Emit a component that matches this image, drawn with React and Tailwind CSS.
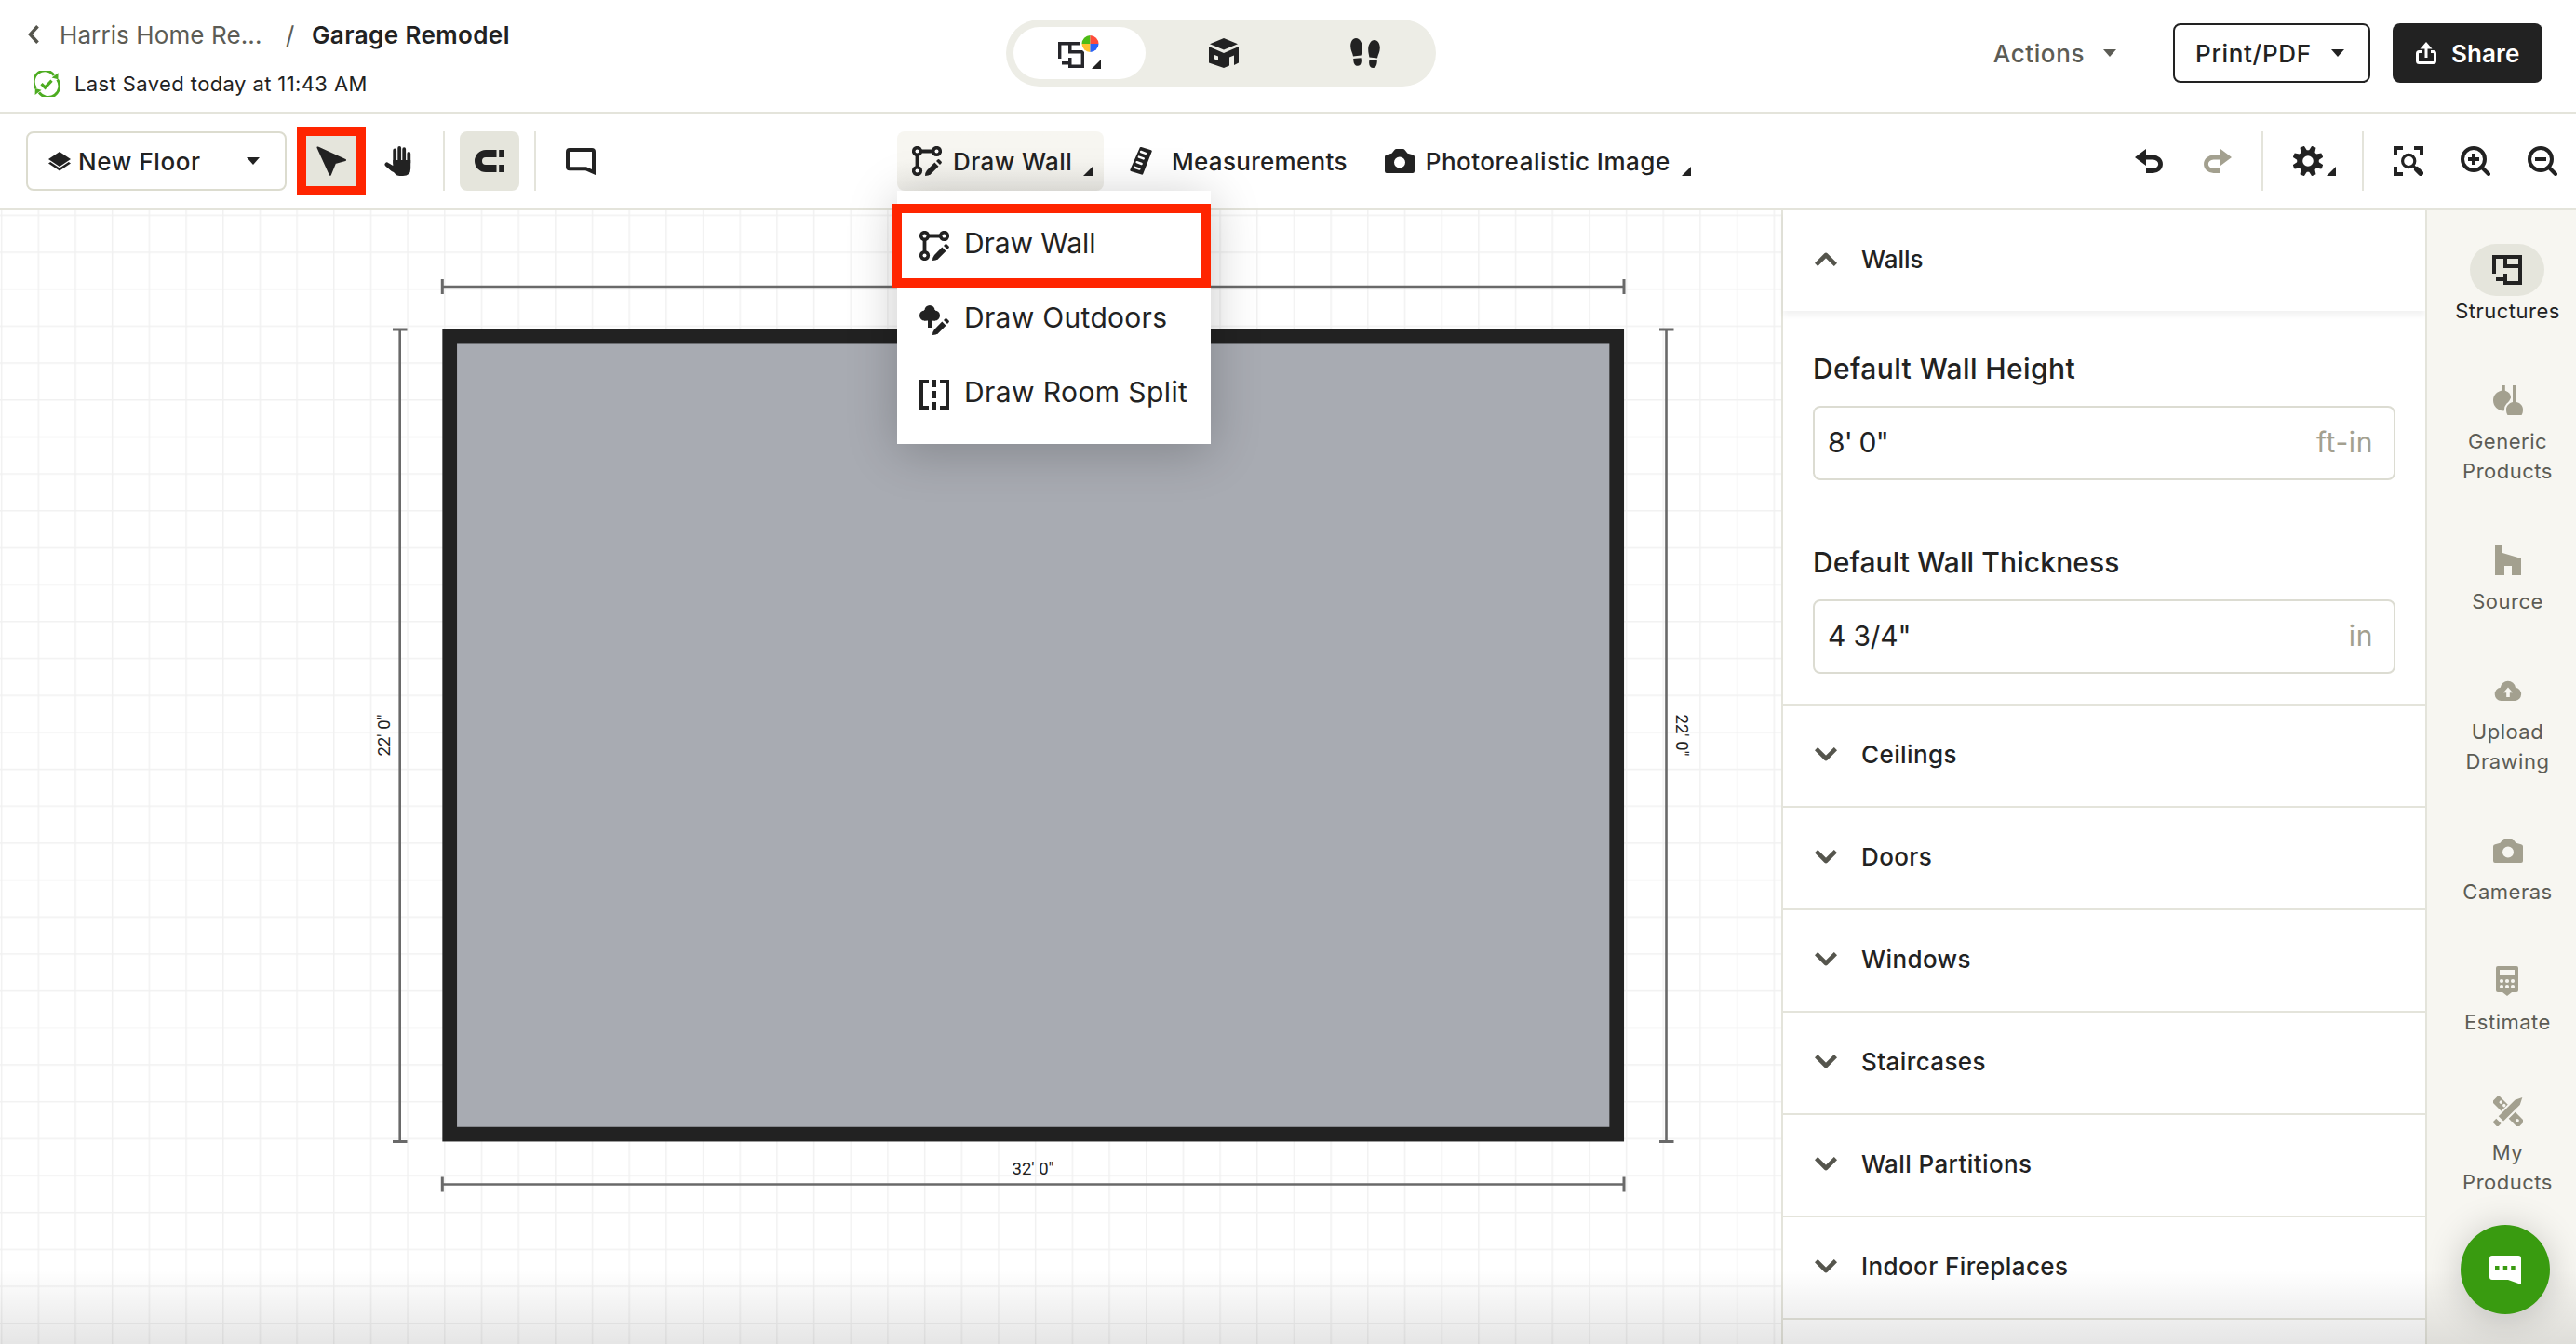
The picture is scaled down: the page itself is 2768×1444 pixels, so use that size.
import { useState } from 'react'

/* ---------- small shared glyphs ---------- */

function Caret({ className }) {
  return (
    <svg viewBox="0 0 14 8" className={`w-3.5 h-2 shrink-0 ${className || ''}`} fill="currentColor">
      <path d="M0 0H14L7 8Z" />
    </svg>
  )
}

function Corner({ className }) {
  return (
    <svg viewBox="0 0 10 10" className={`w-2.5 h-2.5 shrink-0 ${className || ''}`} fill="currentColor">
      <path d="M10 0V10H0Z" />
    </svg>
  )
}

function Chevron({ open }) {
  return (
    <svg viewBox="0 0 24 15" className="w-6 h-[15px] shrink-0 text-[#55554d]" fill="none" stroke="currentColor" strokeWidth="4.6" strokeLinejoin="round">
      <path d={open ? 'M1.6 13.4 12 3 22.4 13.4' : 'M1.6 1.6 12 12 22.4 1.6'} />
    </svg>
  )
}

function Divider({ className }) {
  return <div className={`w-0.5 h-16 shrink-0 bg-[#e4e4db] ${className || ''}`} />
}

/* ---------- icons ---------- */

const Pencil = () => (
  <>
    <path d="M24.3 17.6 28.5 21.8 20 30.2Q18 31.8 14 32 14.2 28 16 26Z" />
    <path d="M26 16 27.8 14.3Q28.6 13.7 29.5 14.5L31.5 16.6Q32.3 17.4 31.6 18.2L30 20Z" />
  </>
)

function DrawWallIcon() {
  return (
    <svg viewBox="0 0 32 32" className="w-8 h-8 shrink-0" fill="currentColor">
      <path d="M5.5 5.5H26.5M5.5 5.5V26.5" fill="none" stroke="currentColor" strokeWidth="3.8" />
      {[[5.5, 5.5], [26.5, 5.5], [5.5, 26.5]].map(([x, y]) => (
        <g key={`${x}-${y}`}>
          <circle cx={x} cy={y} r="5.6" />
          <circle cx={x} cy={y} r="2" fill="#fff" />
        </g>
      ))}
      <Pencil />
    </svg>
  )
}

function OutdoorsIcon() {
  return (
    <svg viewBox="0 0 32 32" className="w-8 h-8 shrink-0" fill="currentColor">
      <circle cx="11" cy="5.5" r="5.5" />
      <circle cx="5.5" cy="11" r="5.5" />
      <circle cx="16.5" cy="11" r="5.5" />
      <path d="M5 5H17V16.5H5ZM9 16H13V24H9Z" />
      <Pencil />
    </svg>
  )
}

function RoomSplitIcon() {
  return (
    <svg viewBox="0 0 32 32" className="w-8 h-8 shrink-0" fill="currentColor">
      <path d="M0 0H10V4H4V28H10V32H0ZM32 0H22V4H28V28H22V32H32ZM14 0H18V8H14ZM14 12H18V20H14ZM14 24H18V32H14Z" />
    </svg>
  )
}

function PlanViewIcon() {
  return (
    <svg viewBox="0 0 46 36" className="w-[46px] h-9" fill="#26262b">
      <path d="M0 7H26V10.4H14.5V16H28V35H11V31.6H4V28H11V24H14.5V31.6H24.6V19.4H11V10.4H3.4V25H0Z" />
      <circle cx="34.5" cy="9" r="11" fill="#fff" />
      <path d="M34.5 9V0A9 9 0 0 0 25.5 9Z" fill="#4dbc15" />
      <path d="M34.5 9H43.5A9 9 0 0 0 34.5 0Z" fill="#ff4b3a" />
      <path d="M34.5 9H25.5A9 9 0 0 0 34.5 18Z" fill="#ffc22e" />
      <path d="M34.5 9V18A9 9 0 0 0 43.5 9Z" fill="#2b63f6" />
      <path d="M46 26V36H36Z" fill="#222" />
    </svg>
  )
}

function CubeIcon() {
  return (
    <svg viewBox="0 0 32 32" className="w-8 h-8" fill="#222">
      <path d="M16 0 31 6.2 16 12.6 1 6.2Z" />
      <path fillRule="evenodd" d="M0 9 16 16 32 9V26.5L27 29V18.5L22 20.5V29.5L16 32 0 26.5ZM6 18V22.5L10 24V19.6Z" />
    </svg>
  )
}

function FootstepsIcon() {
  return (
    <svg viewBox="0 0 32 32" className="w-8 h-8" fill="#222">
      <path d="M6 0C10.5 0 13 5.5 13 10.5 13 14 12 16 11.6 18.6L3 19.6C2.6 16 .2 13 .2 8.5 .2 4 2.5 0 6 0Z" />
      <path d="M3.2 22 11.5 21.2C12.5 25.5 11.5 29.5 8 29.8 4.5 30 3.2 26.5 3.2 22Z" />
      <path d="M26 2C22 2 19.2 7 19.2 12 19.2 15.5 20 17.6 20.4 20.6L29 21.6C29.5 18 31.8 15 31.8 10.5 31.8 6 29.5 2 26 2Z" />
      <path d="M20.5 23.2 28.8 24C28.8 28.5 27.5 32.2 24 32 20.5 31.6 19.5 27.5 20.5 23.2Z" />
    </svg>
  )
}

function SavedIcon() {
  return (
    <svg viewBox="0 0 28 28" className="w-7 h-7 shrink-0" fill="none" stroke="#4dac21" strokeWidth="2.8">
      <path d="M2.6 19A12 12 0 0 1 22 4.8M25.6 9.5A12 12 0 0 1 6 23.4" />
      <path d="M26.6 2.2 26.4 9.2 19.6 7.4ZM1.6 26 1.8 19 8.6 20.8Z" fill="#4dac21" stroke="none" />
      <path d="M8.5 14.2 12.5 18.2 19.5 10.6" strokeWidth="3.2" />
    </svg>
  )
}

function ShareIcon() {
  return (
    <svg viewBox="0 0 22 24" className="w-[22px] h-6 shrink-0" fill="none" stroke="currentColor" strokeWidth="3">
      <path d="M6 10.5H3.5Q1.5 10.5 1.5 12.5V20.5Q1.5 22.5 3.5 22.5H18.5Q20.5 22.5 20.5 20.5V12.5Q20.5 10.5 18.5 10.5H16M11 17V5" />
      <path d="M11 0 17.5 7.5H4.5Z" fill="currentColor" stroke="none" />
    </svg>
  )
}

function LayersIcon() {
  return (
    <svg viewBox="0 0 24 21" className="w-6 h-[21px] shrink-0" fill="currentColor">
      <path d="M12 0 24 8 12 16 0 8Z" />
      <path d="M0 12.4 2.2 11 12 17.6 21.8 11 24 12.4 12 20.6Z" />
    </svg>
  )
}

function CursorIcon() {
  return (
    <svg viewBox="0 0 32 32" className="w-8 h-8" fill="currentColor" stroke="currentColor" strokeWidth="2" strokeLinejoin="round">
      <path d="M1.5 1.5 31 15 20 18 14.8 30.8Z" />
    </svg>
  )
}

function HandIcon() {
  return (
    <svg viewBox="0 0 30 32" className="w-[30px] h-8" fill="none" stroke="currentColor" strokeLinecap="round" strokeLinejoin="round">
      <path d="M11.2 18V4.5M16.2 16V2M21.2 16V3.2M26.3 18V8" strokeWidth="3.8" />
      <path d="M2.8 19.8 9 25" strokeWidth="4.6" />
      <path d="M9.3 15H28.2V24Q28.2 32 20 32H16.5Q13 32 10.5 28.5L2 21.5 5 18.5 9.3 21Z" fill="currentColor" stroke="none" />
    </svg>
  )
}

function MagnetIcon() {
  return (
    <svg viewBox="0 0 32 24" className="w-8 h-6" fill="currentColor">
      <path d="M23.5 0H12A12 12 0 0 0 12 24H23.5V16H12A4 4 0 0 1 12 8H23.5ZM26.2 0H32V8H26.2ZM26.2 16H32V24H26.2Z" />
    </svg>
  )
}

function CommentIcon() {
  return (
    <svg viewBox="0 0 32 29" className="w-8 h-[29px]" fill="none" stroke="currentColor" strokeWidth="4">
      <path d="M4 2H28Q30 2 30 4V26L21.5 22.2H4Q2 22.2 2 20.2V4Q2 2 4 2Z" />
    </svg>
  )
}

function RulerIcon() {
  return (
    <svg viewBox="0 0 24 30" className="w-6 h-[30px] shrink-0" fill="currentColor">
      <path d="M10.8.6Q11.3-.3 12.4.1L22.9 3.3Q24 3.7 23.7 4.8L14.3 28.8Q13.8 30 12.6 29.6L1.2 26Q0 25.5.4 24.3Z" />
      <path d="M12 5 17 6.8M9.8 10.6 14.8 12.4M7.6 16.2 12.6 18M5.4 21.8 10.4 23.6" stroke="#fff" strokeWidth="2.4" strokeLinecap="round" />
    </svg>
  )
}

function CameraIcon() {
  return (
    <svg viewBox="0 0 32 26" className="w-8 h-[26px] shrink-0" fill="currentColor">
      <path fillRule="evenodd" d="M2 6.2 7.5 4.8 10.5 1Q11.2 0 12.5 0H19.5Q20.8 0 21.5 1L24.5 4.8 30 6.2Q32 6.7 32 8.5V24Q32 26 30 26H2Q0 26 0 24V8.5Q0 6.7 2 6.2ZM16 8.5A6 6 0 1 0 16 20.5 6 6 0 1 0 16 8.5Z" />
    </svg>
  )
}

function TurnArrow({ flip }) {
  return (
    <svg viewBox="0 0 30 26" className={flip ? 'w-[30px] h-[26px] -scale-x-100 text-[#a3a08f]' : 'w-[30px] h-[26px]'}>
      <path d="M0 9 12 0V18Z" fill="currentColor" />
      <path d="M11 9H19.5A8 7.2 0 0 1 19.5 23.5H12" fill="none" stroke="currentColor" strokeWidth="4.8" />
    </svg>
  )
}

function GearIcon() {
  return (
    <svg viewBox="0 0 32 32" className="w-8 h-8" fill="currentColor">
      {[22.5, 67.5, 112.5, 157.5, 202.5, 247.5, 292.5, 337.5].map(a => (
        <path key={a} d="M12.4 6 13.6-.4Q16-1 18.4-.4L19.6 6Z" transform={`rotate(${a} 16 16)`} />
      ))}
      <circle cx="16" cy="16" r="8.8" fill="none" stroke="currentColor" strokeWidth="6" />
    </svg>
  )
}

function ScanIcon() {
  return (
    <svg viewBox="0 0 32 32" className="w-8 h-8" fill="none" stroke="currentColor">
      <path d="M2 10V2H10M22 2H30V10M2 22V30H10" strokeWidth="4" />
      <circle cx="16.2" cy="16" r="6.6" strokeWidth="3.2" />
      <path d="M21 21 23.5 23.5" strokeWidth="3" />
      <path d="M25 25 29 29" strokeWidth="6" strokeLinecap="round" />
    </svg>
  )
}

function ZoomIcon({ plus }) {
  return (
    <svg viewBox="0 0 32 32" className="w-8 h-8" fill="none" stroke="currentColor" strokeWidth="4">
      <circle cx="14" cy="14" r="12" />
      <path d="M22.5 22.5 30 30" strokeLinecap="round" />
      <path d={plus ? 'M8 14H20M14 8V20' : 'M8 14H20'} />
    </svg>
  )
}

function StructuresIcon() {
  return (
    <svg viewBox="0 0 32 32" className="w-8 h-8 text-[#222]" fill="currentColor">
      <path fillRule="evenodd" d="M0 0H32V32H12V28H4V24H12V20H16V28H28V14H12V4H4V20H0ZM16 4V10H28V4Z" />
    </svg>
  )
}

function LampsIcon() {
  return (
    <svg viewBox="0 0 32 32" className="w-8 h-8" fill="currentColor">
      <path d="M9 0H12.8V6H9Z" />
      <path d="M11 5C16.5 6.5 19 9.5 19 13.5L11.5 27.5C4.5 27 0 22.5 0 16 0 10 4.5 6.5 11 5Z" />
      <path d="M21 0H25V18C29.5 19 32 22 32 26 32 28.5 31.5 30.5 30.5 32H15.5C14.5 30.5 14 28.5 14 26 14 22 17 19 21 18Z" stroke="#f7f6f1" strokeWidth="4" paintOrder="stroke" />
    </svg>
  )
}

function SourceIcon() {
  return (
    <svg viewBox="0 0 28 32" className="w-7 h-8" fill="currentColor">
      <path d="M0 0H8V8L28 14V32H18V22H10V32H0Z" />
    </svg>
  )
}

function UploadIcon() {
  return (
    <svg viewBox="0 0 30 22" className="w-[30px] h-[22px]" fill="currentColor">
      <path d="M7.5 22A7.2 7.2 0 0 1 6.8 7.7 8.2 8.2 0 0 1 23 7.7 7.2 7.2 0 0 1 22.5 22Z" />
      <path d="M15 7.5 20 13.2H16.8V18H13.2V13.2H10Z" fill="#f7f6f1" />
    </svg>
  )
}

function EstimateIcon() {
  return (
    <svg viewBox="0 0 24 32" className="w-6 h-8" fill="currentColor">
      <path d="M2 0H22Q24 0 24 2V26Q24 28 22 28H17L12 32 7 28H2Q0 28 0 26V2Q0 0 2 0Z" />
      <path d="M4 4H20V10H4Z" fill="#f7f6f1" />
      {[6, 12, 18].map(x => [16, 22].map(y => <circle key={`${x}-${y}`} cx={x} cy={y} r="2.1" fill="#f7f6f1" />))}
    </svg>
  )
}

function ToolsIcon() {
  return (
    <svg viewBox="0 0 32 32" className="w-8 h-8" fill="currentColor">
      <g transform="rotate(45 16 16)">
        <path d="M-3.5 12Q-3.5 11-2.5 11H35Q36 11 36 12V20Q36 21 35 21H-2.5Q-3.5 21-3.5 20Z" />
        <circle cx="3.5" cy="14.5" r="1.7" fill="#f7f6f1" />
        <circle cx="8.5" cy="14.5" r="1.7" fill="#f7f6f1" />
        <circle cx="30" cy="16" r="1.9" fill="#f7f6f1" />
      </g>
      <g transform="rotate(-45 16 16)">
        <path d="M-3 12.5H1.5V20H-3Q-4 20-4 19V13.5Q-4 12.5-3 12.5ZM5 12.5H30L37.5 16.2 30 20H5Z" stroke="#f7f6f1" strokeWidth="4" paintOrder="stroke" />
      </g>
    </svg>
  )
}

/* ---------- data ---------- */

const drawMenu = [
  { label: 'Draw Wall', icon: DrawWallIcon, cls: 'tracking-[-0.1px]' },
  { label: 'Draw Outdoors', icon: OutdoorsIcon, cls: 'tracking-[0.3px]' },
  { label: 'Draw Room Split', icon: RoomSplitIcon, cls: 'tracking-[0.4px]' },
]

const sections = ['Ceilings', 'Doors', 'Windows', 'Staircases', 'Wall Partitions', 'Indoor Fireplaces']

const rail = [
  { lines: ['Structures'], icon: StructuresIcon },
  { lines: ['Generic', 'Products'], icon: LampsIcon },
  { lines: ['Source'], icon: SourceIcon },
  { lines: ['Upload', 'Drawing'], icon: UploadIcon },
  { lines: ['Cameras'], icon: CameraIcon },
  { lines: ['Estimate'], icon: EstimateIcon },
  { lines: ['My', 'Products'], icon: ToolsIcon },
]

/* ---------- page parts ---------- */

function Header() {
  return (
    <header className="flex items-center h-[122px] shrink-0 border-b-2 border-[#e4e4db]">
      <div className="w-[1081px] shrink-0 flex flex-col gap-[21px] pt-[7px]">
        <div className="flex items-center h-8 pl-[30px] text-[26px]">
          <svg viewBox="0 0 12 20" className="w-3 h-5 mr-[22px]" fill="none" stroke="#55554d" strokeWidth="3.6">
            <path d="M10.5 1.2 2.5 10 10.5 18.8" />
          </svg>
          <span className="w-[243px] text-[#5c5c55] tracking-[0.1px]">Harris Home Re...</span>
          <span className="w-7 text-[#5c5c55]">/</span>
          <span className="font-semibold tracking-[0.4px]">Garage Remodel</span>
        </div>
        <div className="flex items-center h-8 pl-9 gap-4 text-[22px]">
          <SavedIcon />
          <span className="tracking-[0.4px]">Last Saved today at 11:43 AM</span>
        </div>
      </div>

      {/* View switch */}
      <div className="w-[462px] h-[72px] rounded-full bg-[#edede6] flex items-center gap-3 pl-2 shrink-0 -mt-1.5">
        <button className="w-[142px] h-14 rounded-full bg-white flex items-center justify-center pb-0.5"><PlanViewIcon /></button>
        <button className="w-[142px] h-14 flex items-center justify-center pl-0.5"><CubeIcon /></button>
        <button className="w-[142px] h-14 flex items-center justify-center pr-0.5"><FootstepsIcon /></button>
      </div>

      <div className="ml-auto pr-9 flex items-center gap-6 text-[26px] font-medium -mt-1.5">
        <button className="flex items-center gap-5 text-[#5c5c55] mr-[37px]">
          <span className="tracking-[0.6px]">Actions</span>
          <Caret />
        </button>
        <button className="w-[212px] h-16 rounded-lg border-2 border-[#222] flex items-center justify-between pl-[22px] pr-[26px]">
          <span className="tracking-[0.7px]">Print/PDF</span>
          <Caret />
        </button>
        <button className="w-[161px] h-16 rounded-lg bg-[#222] text-white flex items-center gap-4 pl-[25px] font-semibold">
          <ShareIcon />
          <span className="tracking-[0.1px]">Share</span>
        </button>
      </div>
    </header>
  )
}

function DrawMenu() {
  return (
    <div className="absolute left-0 top-16 z-20 w-[337px] h-[272px] bg-white py-4 font-normal shadow-[0_8px_50px_rgba(0,0,0,0.22)]">
      {drawMenu.map(({ label, icon: Icon, cls }) => (
        <div key={label} className="h-20 pl-6 flex items-center gap-4 text-[30px]">
          <span className="mt-1.5"><Icon /></span>
          <span className={`whitespace-nowrap ${cls}`}>{label}</span>
        </div>
      ))}
      <div className="absolute -left-[5px] top-3.5 w-[342px] h-[90px] border-10 border-[#ff2500]" />
    </div>
  )
}

function Toolbar({ menuOpen, onToggle }) {
  return (
    <div className="flex items-center h-[104px] shrink-0 border-b-2 border-[#e4e4db] pl-7 text-[26px] font-medium">
      <button className="w-[280px] h-16 rounded-lg border-2 border-[#dcdccf] flex items-center pl-[22px] pr-[27px]">
        <LayersIcon />
        <span className="ml-2 tracking-[0.6px]">New Floor</span>
        <Caret className="ml-auto" />
      </button>
      <button className="ml-[11px] w-[74px] h-[74px] border-10 border-[#ff2500] bg-[#e5e5dc] flex items-center justify-center shrink-0">
        <CursorIcon />
      </button>
      <button className="ml-5"><HandIcon /></button>
      <Divider className="ml-[33px]" />
      <button className="ml-4 w-16 h-16 rounded-lg bg-[#e5e5dc] flex items-center justify-center"><MagnetIcon /></button>
      <Divider className="ml-4" />
      <button className="ml-8"><CommentIcon /></button>

      <div className="relative ml-[324px]">
        <button
          onClick={onToggle}
          className="w-[222px] h-16 rounded-lg bg-linear-to-b from-[#f7f6f1] from-50% to-[#edece7] flex items-center pl-4"
        >
          <DrawWallIcon />
          <span className="ml-3 w-[130px] text-left tracking-[0.4px] whitespace-nowrap">Draw Wall</span>
          <Corner className="ml-2.5 mt-[22px]" />
        </button>
        {menuOpen && <DrawMenu />}
      </div>
      <button className="ml-7 flex items-center gap-[21px]">
        <RulerIcon />
        <span className="tracking-[0.3px]">Measurements</span>
      </button>
      <button className="ml-10 flex items-center">
        <CameraIcon />
        <span className="ml-3 tracking-[0.5px]">Photorealistic Image</span>
        <Corner className="ml-3 mt-[22px]" />
      </button>

      <div className="ml-auto flex items-center pr-5">
        <button><TurnArrow /></button>
        <button className="ml-11"><TurnArrow flip /></button>
        <Divider className="ml-8" />
        <button className="ml-8 flex items-center">
          <GearIcon />
          <Corner className="ml-1 mt-[22px]" />
        </button>
        <Divider className="ml-7" />
        <button className="ml-8"><ScanIcon /></button>
        <button className="ml-10"><ZoomIcon plus /></button>
        <button className="ml-10"><ZoomIcon /></button>
      </div>
    </div>
  )
}

function FloorPlan() {
  // origin is the top-left corner of the canvas area
  return (
    <svg viewBox="0 0 1914 1218" className="w-[1914px] h-[1218px] shrink-0 block">
      <defs>
        <pattern id="grid" width="39.68" height="39.68" x="0.9" y="4.6" patternUnits="userSpaceOnUse">
          <path d="M0 .75H39.68M.75 0V39.68" stroke="#f1f1f1" strokeWidth="1.5" fill="none" />
        </pattern>
      </defs>
      <rect width="1914" height="1218" fill="url(#grid)" />
      <rect x="483.2" y="135.6" width="1254" height="857" fill="#a8abb2" stroke="#222" strokeWidth="15.7" />
      <g stroke="#696969" strokeWidth="2.6" fill="none">
        <path d="M475 82H1745M475 1046.5H1745M429.7 128V1001M1790.5 128V1001" />
        <path d="M475.3 74V90M1745 74V90M475.3 1038.5V1054.5M1745 1038.5V1054.5" strokeWidth="3" />
        <path d="M422 128H437.5M422 1000.5H437.5M1783 128H1798.5M1783 1000.5H1798.5" strokeWidth="3" />
      </g>
      <g className="font-['Roboto',sans-serif] text-[18.5px]" fill="#222" textAnchor="middle">
        <text x="1110" y="1035.5">32' 0"</text>
        <text transform="translate(419 564) rotate(-90)">22' 0"</text>
        <text transform="translate(1800.5 564) rotate(90)">22' 0"</text>
      </g>
    </svg>
  )
}

function Field({ label, value, unit, labelCls, valueCls }) {
  return (
    <div>
      <div className={`h-10 flex items-center text-[30px] font-medium ${labelCls}`}>{label}</div>
      <div className="mt-5 h-20 w-[626px] rounded-lg border-2 border-[#dcdcd2] flex items-center justify-between pl-3.5 pr-[22px] pb-0.5 text-[30px]">
        <span className={valueCls}>{value}</span>
        <span className="text-[#a3a08f] tracking-[0.6px]">{unit}</span>
      </div>
    </div>
  )
}

function Panel() {
  return (
    <aside className="w-[692px] shrink-0 border-l-2 border-[#e4e4db] bg-white text-[26px] font-medium">
      <div className="h-[108px] flex items-center gap-[26px] pl-[34px] pb-1 shadow-[0_5px_6px_rgba(0,0,0,0.05)]">
        <Chevron open />
        <span>Walls</span>
      </div>
      <div className="h-[424px] border-b-2 border-[#e4e4db] pl-8 pt-[42px] flex flex-col gap-[68px] font-normal">
        <Field label="Default Wall Height" value={'8\' 0"'} unit="ft-in" labelCls="tracking-[0.4px]" valueCls="tracking-[-0.8px]" />
        <Field label="Default Wall Thickness" value={'4 3/4"'} unit="in" labelCls="tracking-[0.1px]" valueCls="tracking-[-0.2px]" />
      </div>
      {sections.map(name => (
        <div key={name} className="h-[110px] border-b-2 border-[#e4e4db] flex items-center gap-[26px] pl-[34px] pb-[3px]">
          <Chevron />
          <span className="tracking-[0.4px]">{name}</span>
        </div>
      ))}
    </aside>
  )
}

function Rail() {
  return (
    <nav className="w-[162px] shrink-0 border-l-2 border-[#e4e4db] bg-[#f7f6f1] pl-[13px] pt-9 flex flex-col items-center gap-[52px]">
      {rail.map(({ lines, icon: Icon }, i) => (
        <button key={lines.join(' ')} className={i === 0 ? 'flex flex-col items-center text-[#222]' : 'flex flex-col items-center text-[#a3a08f]'}>
          <span className={i === 0 ? 'w-20 h-14 rounded-full bg-[#e5e5dc] flex items-center justify-center' : 'w-20 h-14 flex items-center justify-center'}>
            <Icon />
          </span>
          {lines.map(l => (
            <span key={l} className={i === 0 ? 'text-[22px] leading-8 tracking-[0.5px]' : 'text-[22px] leading-8 tracking-[0.5px] text-[#5c5c55]'}>{l}</span>
          ))}
        </button>
      ))}
    </nav>
  )
}

export default function App() {
  const [menuOpen, setMenuOpen] = useState(true)

  return (
    <div className="relative w-[2768px] h-[1444px] overflow-hidden bg-white text-[#222] font-['Inter',sans-serif] flex flex-col">
      <Header />
      <Toolbar menuOpen={menuOpen} onToggle={() => setMenuOpen(!menuOpen)} />

      <main className="flex flex-1 min-h-0">
        <FloorPlan />
        <Panel />
        <Rail />
      </main>

      {/* Fade along the bottom edge */}
      <div className="absolute inset-x-0 bottom-0 h-20 bg-linear-to-b from-transparent to-black/10 pointer-events-none" />

      {/* Chat */}
      <button className="absolute right-7 bottom-8 w-24 h-24 rounded-full bg-[#399b10] flex items-center justify-center shadow-[0_4px_40px_rgba(0,0,0,0.2)]">
        <svg viewBox="0 0 34 31" className="w-[34px] h-[31px]">
          <path d="M3 0H31Q34 0 34 3V31L20 26H3Q0 26 0 23V3Q0 0 3 0Z" fill="#fff" />
          <path d="M6 11H10.5V15H6ZM14.7 11H19.2V15H14.7ZM23.2 11H27.7V15H23.2Z" fill="#399b10" />
        </svg>
      </button>
    </div>
  )
}
